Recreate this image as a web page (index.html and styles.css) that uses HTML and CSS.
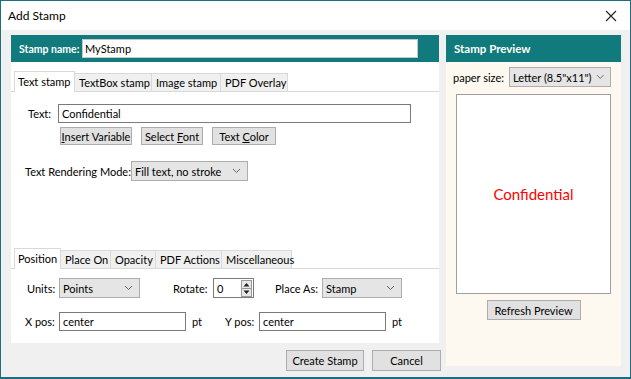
FILE: index.html
```html
<!DOCTYPE html>
<html lang="en">
<head>
  <meta charset="UTF-8" />
  <title>Add Stamp</title>
  <link rel="stylesheet" href="styles.css">
</head>
<body>

  <div class="window">
    <div class="titlebar">
      <span class="title">Add Stamp</span>
      <svg class="close" width="12" height="12" viewBox="0 0 12 12"><path d="M1 1L11 11M11 1L1 11" stroke="#222" stroke-width="1.1"/></svg>
    </div>

    <div class="content">
      <!-- left side -->
      <div class="left">
        <div class="header">
          <span class="header-label name-label">Stamp name:</span>
          <input type="text" class="name-input" value="MyStamp">
        </div>

        <div class="panel">
          <div class="tabs top-tabs">
            <div class="tab selected">Text stamp</div>
            <div class="tab">TextBox stamp</div>
            <div class="tab">Image stamp</div>
            <div class="tab">PDF Overlay</div>
          </div>

          <div class="text-page">
            <div class="row text-row">
              <label class="lbl">Text:</label>
              <div class="field text-field">Confidential</div>
            </div>
            <div class="row btn-row">
              <button class="btn btn-insert"><u>I</u>nsert Variable</button>
              <button class="btn btn-font">Select <u>F</u>ont</button>
              <button class="btn btn-color">Text <u>C</u>olor</button>
            </div>
            <div class="row mode-row">
              <label class="lbl">Text Rendering Mode:</label>
              <div class="combo mode-combo">Fill text, no stroke <svg class="chev" width="9" height="6" viewBox="0 0 9 6"><path d="M1 1L4.5 4.5L8 1" fill="none" stroke="#666"/></svg></div>
            </div>
          </div>

          <div class="tabs bottom-tabs">
            <div class="tab selected">Position</div>
            <div class="tab">Place On</div>
            <div class="tab">Opacity</div>
            <div class="tab">PDF Actions</div>
            <div class="tab">Miscellaneous</div>
          </div>

          <div class="pos-page">
            <div class="row units-row">
              <label class="lbl units-lbl">Units:</label>
              <div class="combo units-combo">Points <svg class="chev" width="9" height="6" viewBox="0 0 9 6"><path d="M1 1L4.5 4.5L8 1" fill="none" stroke="#666"/></svg></div>
              <label class="lbl rotate-lbl">Rotate:</label>
              <div class="spin">
                <span>0</span>
                <div class="spin-btns">
                  <svg width="11" height="17" viewBox="0 0 11 17"><rect x="0.5" y="0.5" width="10" height="16" fill="#e8e8e8" stroke="#999"/><line x1="1" y1="8.5" x2="10" y2="8.5" stroke="#999"/><path d="M2.5 6.5L5.5 3L8.5 6.5Z" fill="#222"/><path d="M2.5 10.5L5.5 14L8.5 10.5Z" fill="#222"/></svg>
                </div>
              </div>
              <label class="lbl place-lbl">Place As:</label>
              <div class="combo place-combo">Stamp <svg class="chev" width="9" height="6" viewBox="0 0 9 6"><path d="M1 1L4.5 4.5L8 1" fill="none" stroke="#666"/></svg></div>
            </div>
            <div class="row xy-row">
              <label class="lbl">X pos:</label>
              <div class="field xy-field">center</div>
              <span class="unit">pt</span>
              <label class="lbl ypos-lbl">Y pos:</label>
              <div class="field xy-field">center</div>
              <span class="unit">pt</span>
            </div>
          </div>
        </div>

        <div class="footer">
          <button class="btn btn-create">Create Stamp</button>
          <button class="btn btn-cancel">Cancel</button>
        </div>
      </div>

      <!-- right side -->
      <div class="right">
        <div class="header">
          <span class="header-label">Stamp Preview</span>
        </div>
        <div class="preview-body">
          <div class="row paper-row">
            <label class="lbl">paper size:</label>
            <div class="combo paper-combo">Letter (8.5"x11") <svg class="chev" width="9" height="6" viewBox="0 0 9 6"><path d="M1 1L4.5 4.5L8 1" fill="none" stroke="#666"/></svg></div>
          </div>
          <div class="page">
            <span class="stamp-text">Confidential</span>
          </div>
          <button class="btn btn-refresh">Refresh Preview</button>
        </div>
      </div>
    </div>
  </div>

</body>
</html>
```

FILE: styles.css
```css
body {
  margin: 0;
  font-family: Lato, "Open Sans", sans-serif;
  font-size: 11px;
  color: #000;
  background-color: #f0f0f0;
  white-space: nowrap;
}
.window {
  width: 631px;
  height: 379px;
  box-sizing: border-box;
  border: 1px solid #1b6f7e;
  border-bottom-width: 2px;
  background-color: #f0f0f0;
  display: flex;
  flex-direction: column;
}
.titlebar {
  height: 29px;
  background-color: white;
  display: flex;
  align-items: center;
  justify-content: space-between;
  padding: 0 13px 0 7px;
  flex-shrink: 0;
}
.title {
  font-size: 12px;
}
.content {
  display: flex;
  gap: 7px;
  padding: 5px 0 0 10px;
}
.left {
  width: 428px;
  display: flex;
  flex-direction: column;
}
.right {
  width: 175px;
  display: flex;
  flex-direction: column;
}
.header {
  height: 27px;
  background-color: #117a7c;
  display: flex;
  align-items: center;
  padding: 0 8px;
  flex-shrink: 0;
}
.header-label {
  color: white;
  font-weight: bold;
  font-size: 11.5px;
}
.name-label {
  width: 63px;
  flex-shrink: 0;
  font-size: 10.5px;
}
.name-input {
  width: 336px;
  height: 19px;
  box-sizing: border-box;
  border: 1px solid #c8c8c8;
  padding: 0 2px;
  font-family: inherit;
  font-size: 11px;
  outline: none;
}
.panel {
  height: 281px;
  background-color: white;
  display: flex;
  flex-direction: column;
}
.tabs {
  display: flex;
  align-items: flex-end;
  padding-left: 3px;
  border-bottom: 1px solid #d9d9d9;
}
.top-tabs {
  margin-top: 9px;
}
.tab {
  height: 18px;
  line-height: 18px;
  padding: 0 4px;
  box-sizing: border-box;
  border: 1px solid #d9d9d9;
  border-bottom: none;
  margin-right: -1px;
  background-color: #f0f0f0;
}
.tab.selected {
  height: 21px;
  line-height: 20px;
  background-color: white;
  margin-bottom: -1px;
  padding: 0 3px;
}
.top-tabs .tab:nth-child(1) { width: 61px; }
.top-tabs .tab:nth-child(2) { width: 78px; }
.top-tabs .tab:nth-child(3) { width: 70px; }
.top-tabs .tab:nth-child(4) { width: 68px; }
.bottom-tabs .tab:nth-child(1) { width: 47px; }
.bottom-tabs .tab:nth-child(2) { width: 51px; }
.bottom-tabs .tab:nth-child(3) { width: 46px; }
.bottom-tabs .tab:nth-child(4) { width: 67px; }
.bottom-tabs .tab:nth-child(5) { width: 71px; }
.text-page {
  height: 156px;
}
.row {
  display: flex;
  align-items: center;
}
.field {
  height: 19px;
  line-height: 17px;
  box-sizing: border-box;
  border: 1px solid #7a7a7a;
  background-color: white;
  padding: 0 3px;
}
.text-row {
  margin-top: 12px;
  padding-left: 17px;
}
.text-row .lbl {
  width: 30px;
}
.text-field {
  width: 353px;
}
.btn-row {
  margin-top: 4px;
  padding-left: 49px;
  gap: 9px;
}
.btn {
  height: 18px;
  box-sizing: border-box;
  border: 1px solid #adadad;
  background-color: #e1e1e1;
  font-family: inherit;
  font-size: 11px;
  padding: 0;
  color: #000;
}
.btn-insert { width: 72px; }
.btn-font { width: 62px; }
.btn-color { width: 64px; }
.mode-row {
  margin-top: 16px;
  padding-left: 14px;
}
.mode-row .lbl {
  width: 106px;
}
.combo {
  height: 20px;
  box-sizing: border-box;
  border: 1px solid #adadad;
  background-color: #e5e5e5;
  display: flex;
  align-items: center;
  justify-content: space-between;
  padding: 0 6px 0 3px;
}
.mode-combo {
  width: 117px;
}
.pos-page {
  flex: 1;
}
.units-row {
  margin-top: 9px;
  padding-left: 16px;
}
.units-lbl {
  width: 32px;
}
.units-combo {
  width: 81px;
}
.rotate-lbl {
  margin-left: 33px;
  width: 40px;
}
.spin {
  width: 41px;
  height: 20px;
  box-sizing: border-box;
  border: 1px solid #7a7a7a;
  display: flex;
  align-items: center;
  justify-content: space-between;
  padding: 0 1px 0 3px;
}
.spin-btns {
  display: flex;
}
.place-lbl {
  margin-left: 21px;
  width: 47px;
}
.place-combo {
  width: 80px;
}
.xy-row {
  margin-top: 14px;
  padding-left: 14px;
}
.xy-row .lbl {
  width: 34px;
}
.xy-field {
  width: 127px;
}
.unit {
  margin-left: 6px;
  width: 26px;
}
.ypos-lbl {
  margin-left: 7px;
}
.footer {
  display: flex;
  justify-content: flex-end;
  gap: 8px;
  margin-top: 7px;
  margin-right: -2px;
}
.footer .btn {
  height: 21px;
}
.btn-create { width: 78px; }
.btn-cancel { width: 69px; }
.preview-body {
  height: 304px;
  background-color: #fdf9f1;
  display: flex;
  flex-direction: column;
  align-items: center;
}
.paper-row {
  margin-top: 5px;
  align-self: flex-start;
  padding-left: 7px;
}
.paper-row .lbl {
  width: 56px;
}
.paper-combo {
  width: 102px;
  gap: 4px;
}
.page {
  margin-top: 7px;
  width: 155px;
  height: 200px;
  box-sizing: border-box;
  border: 1px solid #a0a0a0;
  background-color: white;
  display: flex;
  align-items: center;
  justify-content: center;
}
.stamp-text {
  color: #ff0000;
  font-size: 15px;
}
.btn-refresh {
  margin-top: 6px;
  width: 94px;
  height: 20px;
}
```
